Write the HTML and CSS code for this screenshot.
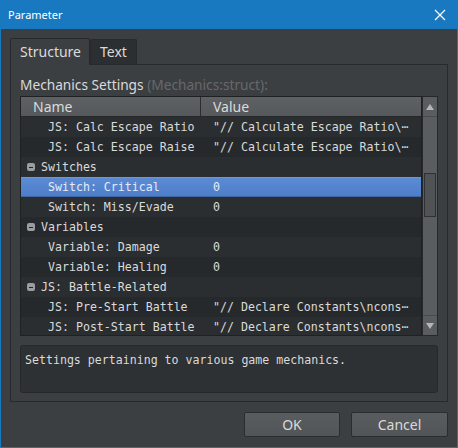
FILE: index.html
```html
<!DOCTYPE html>
<html lang="en">

<head>
  <meta charset="UTF-8" />
  <title>Parameter</title>
  <link rel="stylesheet" href="styles.css">
</head>

<body>
  <div class="dialog">
    <div class="titlebar">
      <span class="title">Parameter</span>
      <svg class="close" width="12" height="12" viewBox="0 0 12 12">
        <path d="M1 1 L11 11 M11 1 L1 11" stroke="#ffffff" stroke-width="1.3" fill="none"/>
      </svg>
    </div>

    <div class="content">
      <div class="tabs">
        <div class="tab active">Structure</div>
        <div class="tab">Text</div>
      </div>

      <div class="pane">
        <div class="caption">Mechanics Settings <span class="hint">(Mechanics:struct):</span></div>

        <div class="tree-wrap">
          <div class="tree">
            <div class="thead">
              <div class="th name">Name</div>
              <div class="th">Value</div>
            </div>
            <div class="rows">
              <div class="row partial"><div class="cell"></div><div class="cell"></div></div>
              <div class="row"><div class="cell child">JS: Calc Escape Ratio</div><div class="cell val">"// Calculate Escape Ratio\⋯</div></div>
              <div class="row"><div class="cell child">JS: Calc Escape Raise</div><div class="cell val">"// Calculate Escape Ratio\⋯</div></div>
              <div class="row"><div class="cell group"><span class="fold"></span>Switches</div><div class="cell val"></div></div>
              <div class="row selected"><div class="cell child">Switch: Critical</div><div class="cell val">0</div></div>
              <div class="row"><div class="cell child">Switch: Miss/Evade</div><div class="cell val">0</div></div>
              <div class="row"><div class="cell group"><span class="fold"></span>Variables</div><div class="cell val"></div></div>
              <div class="row"><div class="cell child">Variable: Damage</div><div class="cell val">0</div></div>
              <div class="row"><div class="cell child">Variable: Healing</div><div class="cell val">0</div></div>
              <div class="row"><div class="cell group"><span class="fold"></span>JS: Battle-Related</div><div class="cell val"></div></div>
              <div class="row"><div class="cell child">JS: Pre-Start Battle</div><div class="cell val">"// Declare Constants\ncons⋯</div></div>
              <div class="row"><div class="cell child">JS: Post-Start Battle</div><div class="cell val">"// Declare Constants\ncons⋯</div></div>
            </div>
          </div>

          <div class="scrollbar">
            <div class="arrow"><span class="tri up"></span></div>
            <div class="track">
              <div class="thumb"></div>
            </div>
            <div class="arrow"><span class="tri down"></span></div>
          </div>
        </div>

        <div class="desc">Settings pertaining to various game mechanics.</div>
      </div>

      <div class="buttons">
        <div class="btn ok">OK</div>
        <div class="btn">Cancel</div>
      </div>
    </div>
  </div>
</body>
</html>
```

FILE: styles.css
```css
body {
    margin: 0;
    background: #1979c0;
}
.dialog {
    width: 458px;
    height: 448px;
    box-sizing: border-box;
    border: 1px solid #1979c0;
    border-top: none;
    background: #3c3f42;
    font-family: "Noto Sans", "Open Sans", sans-serif;
    color: #dadada;
}
.titlebar {
    height: 29px;
    background: #1979c0;
    display: flex;
    align-items: center;
    justify-content: space-between;
    padding: 0 11px 0 7px;
}
.title {
    color: #ffffff;
    font-size: 11px;
}
.content {
    padding: 9px 9px 0 9px;
}

/* tab strip */
.tabs {
    display: flex;
    align-items: flex-end;
    height: 26px;
}
.tab {
    box-sizing: border-box;
    height: 25px;
    padding: 0 9px;
    font-size: 14px;
    line-height: 24px;
    border: 1px solid #27292b;
    border-bottom: none;
    border-radius: 2px 2px 0 0;
    background: #2c2f32;
}
.tab.active {
    height: 27px;
    width: 80px;
    background: #3c3f42;
    position: relative;
    top: 1px;
    line-height: 26px;
    z-index: 1;
}
.pane {
    box-sizing: border-box;
    width: 438px;
    height: 338px;
    border: 1px solid #27292b;
    padding: 11px 9px 0 9px;
}
.caption {
    font-size: 13.7px;
    line-height: 18px;
    height: 18px;
    margin-bottom: 2px;
}
.hint {
    color: #66696c;
}

/* tree list */
.tree-wrap {
    display: flex;
    height: 240px;
}
.tree {
    box-sizing: border-box;
    width: 403px;
    border: 1px solid #1f2123;
    background: #2a2d30;
    overflow: hidden;
}
.thead {
    display: flex;
    height: 19px;
    background: linear-gradient(#5e6164, #56595c);
    border-bottom: 1px solid #26282a;
    font-size: 14px;
    line-height: 19px;
}
.th {
    padding-left: 12px;
}
.th.name {
    width: 167px;
    border-right: 1px solid #2a2c2e;
}
.rows {
    font-family: "DejaVu Sans Mono", monospace;
    font-size: 11.6px;
}
.row {
    display: flex;
    height: 20px;
    line-height: 20px;
    background: #2b2e31;
}
.row:nth-child(odd) {
    background: #26292c;
}
.row.partial {
    height: 0;
}
.row.selected {
    background: linear-gradient(#5b8bd4, #4f7ec8);
    color: #e4ecfa;
    border-top: 1px solid #6d98da;
    border-bottom: 1px solid #3e66a6;
    height: 18px;
    line-height: 18px;
}
.cell {
    white-space: nowrap;
    overflow: hidden;
}
.cell:first-child {
    width: 180px;
    box-sizing: border-box;
}
.cell.child {
    padding-left: 27px;
}
.cell.group {
    padding-left: 6px;
    display: flex;
    align-items: center;
}
.cell.val {
    padding-left: 12px;
    flex: 1;
}
.fold {
    width: 8px;
    height: 8px;
    border-radius: 2px;
    background: #9a9da0;
    margin-right: 6px;
    position: relative;
}
.fold::after {
    content: "";
    position: absolute;
    left: 2px;
    top: 3.5px;
    width: 4px;
    height: 1px;
    background: #202224;
}

/* vertical scrollbar */
.scrollbar {
    box-sizing: border-box;
    width: 16px;
    border: 1px solid #26282a;
    background: #5a5d60;
    display: flex;
    flex-direction: column;
}
.arrow {
    height: 19px;
    display: flex;
    align-items: center;
    justify-content: center;
    background: #5a5d60;
}
.track {
    flex: 1;
    padding-top: 56px;
    border-top: 1px solid #484b4e;
    border-bottom: 1px solid #484b4e;
}
.thumb {
    height: 42px;
    margin: 0 1px;
    border: 1px solid #2e3033;
    background: #505356;
}
.tri {
    width: 0;
    height: 0;
    border-left: 4px solid transparent;
    border-right: 4px solid transparent;
}
.tri.up {
    border-bottom: 6px solid #b4b6b8;
}
.tri.down {
    border-top: 6px solid #b4b6b8;
}

/* description */
.desc {
    box-sizing: border-box;
    margin-top: 9px;
    height: 48px;
    border: 1px solid #26282a;
    border-radius: 3px;
    background: #2e3134;
    padding: 5px 4px;
    font-family: "DejaVu Sans Mono", monospace;
    font-size: 11.6px;
    line-height: 18px;
}

/* dialog buttons */
.buttons {
    display: flex;
    justify-content: flex-end;
    gap: 11px;
    margin-top: 10px;
}
.btn {
    box-sizing: border-box;
    width: 97px;
    height: 25px;
    border: 1px solid #2a2c2e;
    border-radius: 2px;
    background: linear-gradient(#5a5d60, #525558);
    text-align: center;
    font-size: 14px;
    line-height: 23px;
}
.btn.ok {
    width: 96px;
}
```
